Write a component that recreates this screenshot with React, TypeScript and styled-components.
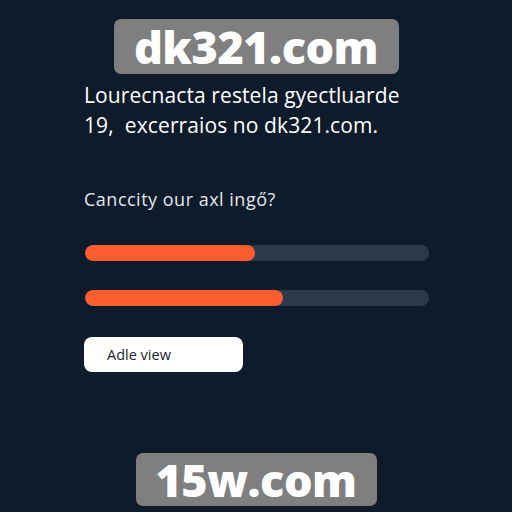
import styled, { createGlobalStyle } from "styled-components";

const GlobalStyle = createGlobalStyle`
  html, body {
    margin: 0;
    padding: 0;
    background: #0e1b2b;
  }
  body {
    font-family: "Open Sans", "Noto Sans", sans-serif;
  }
`;

const bars = [
  { id: "a", value: 49.5 },
  { id: "b", value: 57.7 },
];

export default function App() {
  return (
    <Page>
      <GlobalStyle />
      <Badge $top={0} $width={285} $height={55}>dk321.com</Badge>
      <Content>
        <Lead>
          Lourecnacta restela gyectluarde
          <br />
          19,&nbsp; excerraios no dk321.com.
        </Lead>
        <Question>Canccity our axl ingő?</Question>
        <Bars>
          {bars.map((bar) => (
            <Track key={bar.id}>
              <Fill style={{ width: `${bar.value}%` }} />
            </Track>
          ))}
        </Bars>
        <ViewButton>Adle view</ViewButton>
      </Content>
      <Badge $top={81} $width={241} $height={53}>15w.com</Badge>
    </Page>
  );
}

const Page = styled.div`
  width: 512px;
  height: 512px;
  box-sizing: border-box;
  padding-top: 19px;
  display: flex;
  flex-direction: column;
  align-items: center;
  overflow: hidden;
`;

const Badge = styled.div<{ $top: number; $width: number; $height: number }>`
  flex-shrink: 0;
  width: ${(p) => p.$width}px;
  height: ${(p) => p.$height}px;
  margin-top: ${(p) => p.$top}px;
  background: #7f7f7f;
  border-radius: 7px;
  display: flex;
  align-items: center;
  justify-content: center;
  color: #ffffff;
  font-family: "Open Sans", sans-serif;
  font-weight: 800;
  font-size: 45px;
  letter-spacing: -0.5px;
  line-height: 1;
`;

const Content = styled.div`
  width: 344px;
  display: flex;
  flex-direction: column;
  align-self: flex-start;
  margin-left: 85px;
`;

const Lead = styled.p`
  margin: 6px 0 0 -1px;
  color: #ffffff;
  font-size: 21px;
  line-height: 30px;
  letter-spacing: 0.1px;
`;

const Question = styled.div`
  margin-top: 47px;
  margin-left: -1px;
  color: #e3e7ec;
  font-size: 18px;
  line-height: 24px;
  letter-spacing: 0.5px;
`;

const Bars = styled.div`
  margin-top: 34px;
  display: flex;
  flex-direction: column;
  gap: 29px;
`;

const Track = styled.div`
  height: 16px;
  border-radius: 8px;
  background: #2b3a4b;
  overflow: hidden;
`;

const Fill = styled.div`
  height: 100%;
  border-radius: 8px;
  background: #ff5c2f;
`;

const ViewButton = styled.button`
  margin-top: 31px;
  margin-left: -1px;
  width: 159px;
  height: 35px;
  border: none;
  border-radius: 8px;
  background: #ffffff;
  color: #1c2330;
  font-family: "Open Sans", sans-serif;
  font-size: 14.5px;
  text-align: left;
  padding: 0 0 0 23px;
`;
